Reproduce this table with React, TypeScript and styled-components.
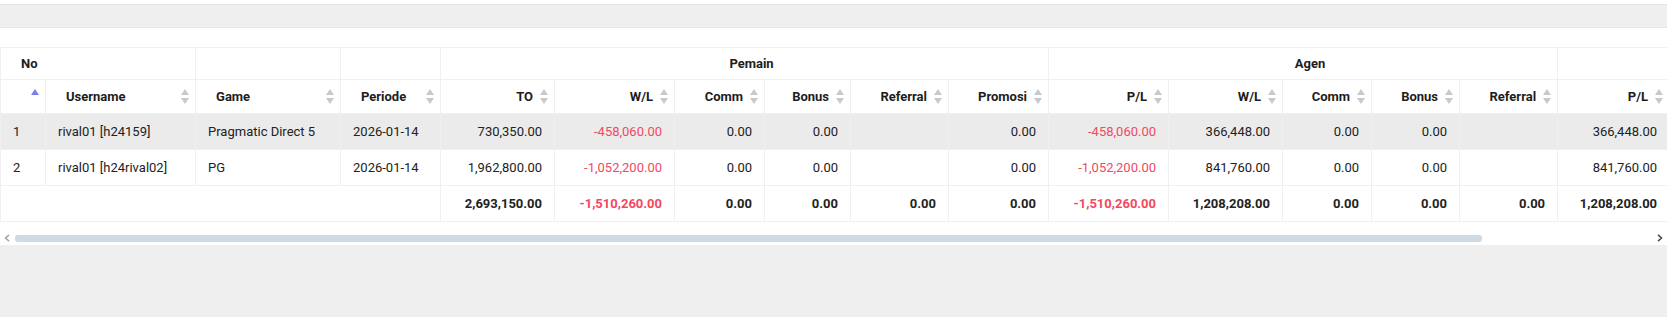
import React from "react";
import styled, { createGlobalStyle } from "styled-components";

const Global = createGlobalStyle`
  html, body { margin: 0; padding: 0; background: #efefef; }
  body { font-family: Roboto, "Liberation Sans", Arial, sans-serif; }
  * { box-sizing: border-box; }
`;

const Page = styled.div`
  width: 1667px;
  height: 317px;
  background: #efefef;
  display: flex;
  flex-direction: column;
  overflow: hidden;
`;

const TopStrip = styled.div`
  height: 5px;
  background: #ffffff;
  border-bottom: 1px solid #e4e4e4;
  box-shadow: 0 1px 2px rgba(0, 0, 0, 0.04);
`;

const Band = styled.div`
  height: 22px;
  background: #efefef;
`;

const Panel = styled.div`
  background: #ffffff;
  border-top: 1px solid #e6e6e6;
  padding: 19px 0 1px 0;
`;

const TableScroll = styled.div`
  width: 100%;
  overflow: hidden;
`;

const Table = styled.table`
  border-collapse: collapse;
  table-layout: fixed;
  width: 1669px;
  font-size: 13px;
  color: #222;
`;

const HeadCell = styled.th<{ $align?: "left" | "right" | "center" }>`
  border: 1px solid #f0f0f0;
  font-weight: 700;
  color: #1d1d1d;
  text-align: ${(p) => p.$align || "left"};
  padding: 0 6px 0 20px;
  white-space: nowrap;
`;

const GroupRow = styled.tr`
  height: 32px;
`;

const SortRow = styled.tr`
  height: 34px;
`;

const HeadInner = styled.div<{ $right?: boolean }>`
  display: flex;
  align-items: center;
  justify-content: ${(p) => (p.$right ? "flex-end" : "space-between")};
  gap: 6px;
`;

const SortWrap = styled.span`
  display: inline-flex;
  flex-direction: column;
  align-items: center;
  gap: 3px;
  width: 9px;
`;

const Tri = styled.span<{ $dir: "up" | "down"; $active?: boolean; $hidden?: boolean }>`
  width: 0;
  height: 0;
  border-left: 4.5px solid transparent;
  border-right: 4.5px solid transparent;
  ${(p) =>
    p.$dir === "up"
      ? `border-bottom: 6px solid ${p.$active ? "#7b80e4" : "#c9c9c9"};`
      : `border-top: 6px solid ${p.$hidden ? "transparent" : "#c9c9c9"};`}
`;

const Row = styled.tr<{ $hl?: boolean }>`
  height: 36px;
  background: ${(p) => (p.$hl ? "#ebebeb" : "#ffffff")};
`;

const Cell = styled.td<{ $right?: boolean; $red?: boolean; $bold?: boolean }>`
  border: 1px solid #f0f0f0;
  padding: 0 12px;
  text-align: ${(p) => (p.$right ? "right" : "left")};
  color: ${(p) => (p.$red ? "#f2495f" : "#222")};
  font-weight: ${(p) => (p.$bold ? 700 : 400)};
  white-space: nowrap;
`;

const ScrollBarRow = styled.div`
  height: 12px;
  margin-top: 10px;
  display: flex;
  align-items: center;
  padding: 0 4px;
`;

const Arrow = styled.svg`
  flex: none;
  width: 6px;
  height: 8px;
`;

const Track = styled.div`
  flex: 1;
  margin: 0 5px;
  height: 7px;
  display: flex;
`;

const Thumb = styled.div`
  width: 1467px;
  height: 7px;
  border-radius: 3px;
  background: #d0dae3;
`;

type Col = { title: string; right: boolean; w: number };

const cols: Col[] = [
  { title: "", right: true, w: 45 },
  { title: "Username", right: false, w: 150 },
  { title: "Game", right: false, w: 145 },
  { title: "Periode", right: false, w: 100 },
  { title: "TO", right: true, w: 114 },
  { title: "W/L", right: true, w: 120 },
  { title: "Comm", right: true, w: 90 },
  { title: "Bonus", right: true, w: 86 },
  { title: "Referral", right: true, w: 98 },
  { title: "Promosi", right: true, w: 100 },
  { title: "P/L", right: true, w: 120 },
  { title: "W/L", right: true, w: 114 },
  { title: "Comm", right: true, w: 89 },
  { title: "Bonus", right: true, w: 88 },
  { title: "Referral", right: true, w: 98 },
  { title: "P/L", right: true, w: 112 },
];

type DataRow = {
  no: string;
  user: string;
  game: string;
  date: string;
  vals: string[];
};

const rows: DataRow[] = [
  {
    no: "1",
    user: "rival01 [h24159]",
    game: "Pragmatic Direct 5",
    date: "2026-01-14",
    vals: ["730,350.00", "-458,060.00", "0.00", "0.00", "", "0.00", "-458,060.00", "366,448.00", "0.00", "0.00", "", "366,448.00"],
  },
  {
    no: "2",
    user: "rival01 [h24rival02]",
    game: "PG",
    date: "2026-01-14",
    vals: ["1,962,800.00", "-1,052,200.00", "0.00", "0.00", "", "0.00", "-1,052,200.00", "841,760.00", "0.00", "0.00", "", "841,760.00"],
  },
];

const totals = ["2,693,150.00", "-1,510,260.00", "0.00", "0.00", "0.00", "0.00", "-1,510,260.00", "1,208,208.00", "0.00", "0.00", "0.00", "1,208,208.00"];

const isRed = (v: string) => v.startsWith("-");

const Sorter = ({ onlyUp }: { onlyUp?: boolean }) => (
  <SortWrap>
    <Tri $dir="up" $active={onlyUp} />
    <Tri $dir="down" $hidden={onlyUp} />
  </SortWrap>
);

export default function App() {
  return (
    <Page>
      <Global />
      <TopStrip />
      <Band />
      <Panel>
        <TableScroll>
          <Table>
            <colgroup>
              {cols.map((c, i) => (
                <col key={i} style={{ width: c.w }} />
              ))}
            </colgroup>
            <thead>
              <GroupRow>
                <HeadCell colSpan={2}>No</HeadCell>
                <HeadCell />
                <HeadCell />
                <HeadCell colSpan={6} $align="center">Pemain</HeadCell>
                <HeadCell colSpan={5} $align="center">Agen</HeadCell>
                <HeadCell />
              </GroupRow>
              <SortRow>
                {cols.map((c, i) => (
                  <HeadCell key={i} $align={c.right ? "right" : "left"}>
                    <HeadInner $right={c.right}>
                      {c.title && <span>{c.title}</span>}
                      <Sorter onlyUp={i === 0} />
                    </HeadInner>
                  </HeadCell>
                ))}
              </SortRow>
            </thead>
            <tbody>
              {rows.map((r, i) => (
                <Row key={r.no} $hl={i === 0}>
                  <Cell>{r.no}</Cell>
                  <Cell>{r.user}</Cell>
                  <Cell>{r.game}</Cell>
                  <Cell>{r.date}</Cell>
                  {r.vals.map((v, j) => (
                    <Cell key={j} $right $red={isRed(v)}>
                      {v}
                    </Cell>
                  ))}
                </Row>
              ))}
              <Row>
                <Cell colSpan={4} />
                {totals.map((v, j) => (
                  <Cell key={j} $right $bold $red={isRed(v)}>
                    {v}
                  </Cell>
                ))}
              </Row>
            </tbody>
          </Table>
        </TableScroll>
        <ScrollBarRow>
          <Arrow viewBox="0 0 6 8">
            <path d="M5 0.8 L1.5 4 L5 7.2" fill="none" stroke="#a8a8a8" strokeWidth="1.6" />
          </Arrow>
          <Track>
            <Thumb />
          </Track>
          <Arrow viewBox="0 0 6 8">
            <path d="M1 0.8 L4.5 4 L1 7.2" fill="none" stroke="#505050" strokeWidth="1.6" />
          </Arrow>
        </ScrollBarRow>
      </Panel>
    </Page>
  );
}
